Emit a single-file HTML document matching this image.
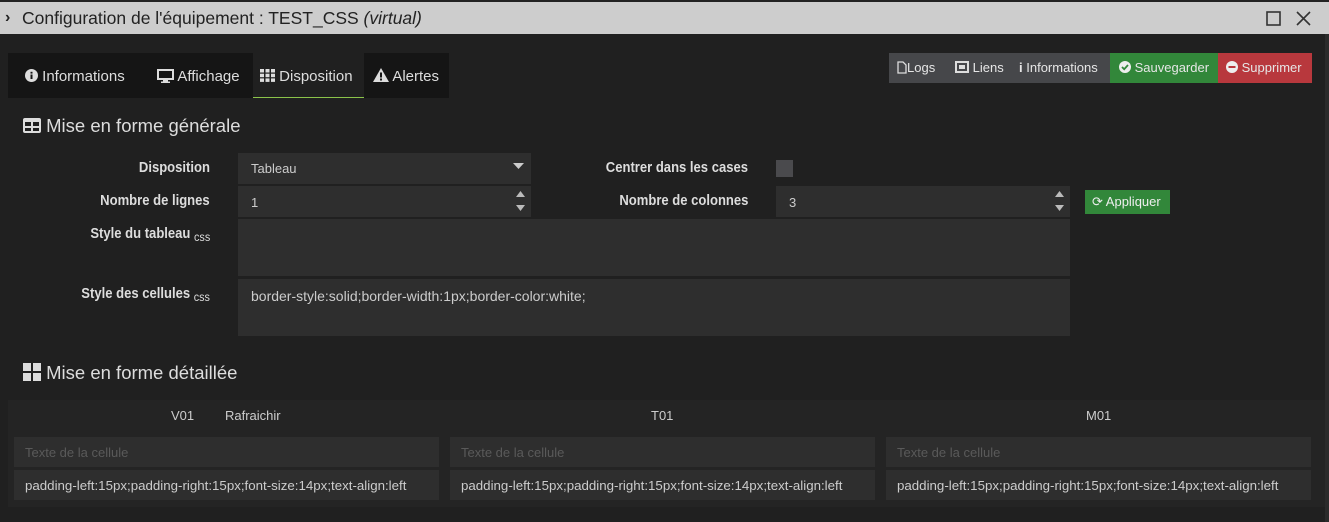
<!DOCTYPE html>
<html><head><meta charset="utf-8"><style>
*{box-sizing:border-box;margin:0;padding:0}
body{width:1329px;height:522px;background:#202020;font-family:"Liberation Sans",sans-serif;color:#ddd;position:relative;overflow:hidden}
.a{position:absolute}
.title{left:0;top:0;width:1329px;height:34px;background:#cdcdcd;border-top:2px solid #222;color:#222;font-size:17.5px;line-height:32px;padding-left:22px}
.tabs{left:8px;top:53px;width:441px;height:45px;background:#151515}
.tab{position:absolute;top:0;height:45px;line-height:47px;font-size:15px;color:#ddd}
.btn{position:absolute;top:53px;height:30px;line-height:30px;font-size:13px;color:#e6e6e6}
.lbl{position:absolute;font-size:14.5px;color:#ddd;text-align:right;font-weight:bold;transform:scaleX(.9);transform-origin:right}
.inp{position:absolute;background:#2e2e2e;font-size:13px;color:#ccc;padding-left:13px}
.h{font-size:18.5px;color:#ddd}
.sp{position:absolute;right:6px;width:9px;height:6px}
</style></head><body>
<div class="a title"><span style="position:absolute;left:5px;top:0;font-weight:bold;font-size:16px">›</span>Configuration de l'équipement : TEST_CSS <i>(virtual)</i>
<svg class="a" style="left:1266px;top:9px" width="15" height="15"><rect x="1" y="1" width="13" height="13" fill="none" stroke="#333" stroke-width="1.6"/></svg>
<svg class="a" style="left:1296px;top:9px" width="15" height="15"><path d="M1 1L14 14M14 1L1 14" stroke="#333" stroke-width="1.6"/></svg>
</div>
<div class="a" style="left:1325px;top:34px;width:4px;height:488px;background:#2b2b2b"></div>

<div class="a tabs">
<div class="tab" style="left:17px"><svg width="13" height="13" style="vertical-align:-1px"><circle cx="6.5" cy="6.5" r="6.5" fill="#ddd"/><rect x="5.5" y="5.5" width="2" height="4.5" fill="#151515"/><rect x="5.5" y="2.8" width="2" height="1.8" fill="#151515"/></svg> Informations</div>
<div class="tab" style="left:149px"><svg width="17" height="14" style="vertical-align:-2px"><rect x="1" y="1" width="15" height="9" fill="none" stroke="#ddd" stroke-width="2"/><rect x="6" y="11" width="5" height="1.5" fill="#ddd"/><rect x="4" y="12.5" width="9" height="1.5" fill="#ddd"/></svg> Affichage</div>
<div class="tab" style="left:245px;width:111px;background:#202020;border-bottom:1px solid #8bc34a;padding-left:7px"><svg width="15" height="13" style="vertical-align:-1px" fill="#ddd"><rect x="0" y="0" width="4" height="3.5"/><rect x="5.5" y="0" width="4" height="3.5"/><rect x="11" y="0" width="4" height="3.5"/><rect x="0" y="4.7" width="4" height="3.5"/><rect x="5.5" y="4.7" width="4" height="3.5"/><rect x="11" y="4.7" width="4" height="3.5"/><rect x="0" y="9.4" width="4" height="3.5"/><rect x="5.5" y="9.4" width="4" height="3.5"/><rect x="11" y="9.4" width="4" height="3.5"/></svg> Disposition</div>
<div class="tab" style="left:365px"><svg width="16" height="14" style="vertical-align:-1px"><path d="M8 0L16 14H0Z" fill="#ddd"/><rect x="7" y="4.5" width="2" height="5" fill="#151515"/><rect x="7" y="10.5" width="2" height="2" fill="#151515"/></svg> Alertes</div>
</div>

<div class="btn" style="left:889px;width:221px;background:#46474a"></div>
<div class="btn" style="left:897px"><svg width="10" height="13" style="vertical-align:-2px"><path d="M1 1H6L9 4V12H1Z" fill="none" stroke="#ddd" stroke-width="1.3"/></svg>Logs</div>
<div class="btn" style="left:955px"><svg width="14" height="12" style="vertical-align:-1px"><rect x="1" y="1" width="12" height="10" fill="none" stroke="#ddd" stroke-width="2"/><rect x="4" y="4" width="6" height="4" fill="#ddd"/></svg> Liens</div>
<div class="btn" style="left:1019px"><b>i</b> Informations</div>
<div class="btn" style="left:1110px;width:108px;background:#32873a;padding-left:9px"><svg width="12" height="12" style="vertical-align:-1px"><circle cx="6" cy="6" r="6" fill="#eee"/><path d="M3 6L5.2 8.2L9 4" stroke="#32873a" stroke-width="1.8" fill="none"/></svg> Sauvegarder</div>
<div class="btn" style="left:1218px;width:94px;background:#b8383d;padding-left:8px"><svg width="12" height="12" style="vertical-align:-1px"><circle cx="6" cy="6" r="6" fill="#eee"/><rect x="2.5" y="5" width="7" height="2" fill="#b8383d"/></svg> Supprimer</div>

<div class="a h" style="left:23px;top:115px"><svg width="18" height="15" style="vertical-align:-1px"><rect x="0" y="0" width="18" height="15" rx="2" fill="#ddd"/><rect x="2" y="4" width="6" height="4" fill="#202020"/><rect x="10" y="4" width="6" height="4" fill="#202020"/><rect x="2" y="10" width="6" height="3" fill="#202020"/><rect x="10" y="10" width="6" height="3" fill="#202020"/></svg>&nbsp;Mise en forme générale</div>

<div class="lbl" style="right:1119px;top:160px">Disposition</div>
<div class="inp" style="left:238px;top:153px;width:293px;height:31px;line-height:31px">Tableau<svg class="a" style="right:7px;top:10px" width="11" height="6"><path d="M0 0H11L5.5 6Z" fill="#ccc"/></svg></div>
<div class="lbl" style="right:581px;top:160px">Centrer dans les cases</div>
<div class="a" style="left:776px;top:160px;width:17px;height:17px;background:#4a4a4d"></div>

<div class="lbl" style="right:1119px;top:193px">Nombre de lignes</div>
<div class="inp" style="left:238px;top:186px;width:293px;height:31px;line-height:33px">1<svg class="sp" style="top:5px" viewBox="0 0 9 6"><path d="M0 6H9L4.5 0Z" fill="#bbb"/></svg><svg class="sp" style="top:19px" viewBox="0 0 9 6"><path d="M0 0H9L4.5 6Z" fill="#bbb"/></svg></div>
<div class="lbl" style="right:581px;top:193px">Nombre de colonnes</div>
<div class="inp" style="left:776px;top:186px;width:294px;height:31px;line-height:33px">3<svg class="sp" style="top:5px" viewBox="0 0 9 6"><path d="M0 6H9L4.5 0Z" fill="#bbb"/></svg><svg class="sp" style="top:19px" viewBox="0 0 9 6"><path d="M0 0H9L4.5 6Z" fill="#bbb"/></svg></div>
<div class="a" style="left:1085px;top:190px;width:85px;height:24px;background:#32873a;font-size:13px;line-height:24px;padding-left:7px;color:#eee">⟳ Appliquer</div>

<div class="lbl" style="right:1119px;top:226px">Style du tableau <span style="font-weight:normal;font-size:12px;position:relative;top:3px">css</span></div>
<div class="inp" style="left:238px;top:219px;width:832px;height:57px"></div>
<div class="lbl" style="right:1119px;top:286px">Style des cellules <span style="font-weight:normal;font-size:12px;position:relative;top:3px">css</span></div>
<div class="inp" style="left:238px;top:279px;width:832px;height:57px;font-size:14px;padding-top:9px">border-style:solid;border-width:1px;border-color:white;</div>

<div class="a h" style="left:23px;top:362px"><svg width="18" height="18" style="vertical-align:-2px" fill="#ddd"><rect x="0" y="0" width="8" height="8"/><rect x="10" y="0" width="8" height="8"/><rect x="0" y="10" width="8" height="8"/><rect x="10" y="10" width="8" height="8"/></svg>&nbsp;Mise en forme détaillée</div>

<div class="a" style="left:8px;top:400px;width:1317px;height:107px;background:#242424"></div>
<div class="a" style="left:171px;top:408px;font-size:13px;color:#ccc">V01</div>
<div class="a" style="left:225px;top:408px;font-size:13px;color:#ccc">Rafraichir</div>
<div class="a" style="left:651px;top:408px;font-size:13px;color:#ccc">T01</div>
<div class="a" style="left:1086px;top:408px;font-size:13px;color:#ccc">M01</div>

<div class="inp" style="left:14px;top:437px;width:425px;height:30px;line-height:32px;color:#5a5a5a;padding-left:11px">Texte de la cellule</div>
<div class="inp" style="left:450px;top:437px;width:425px;height:30px;line-height:32px;color:#5a5a5a;padding-left:11px">Texte de la cellule</div>
<div class="inp" style="left:886px;top:437px;width:425px;height:30px;line-height:32px;color:#5a5a5a;padding-left:11px">Texte de la cellule</div>
<div class="inp" style="left:14px;top:470px;width:425px;height:30px;line-height:32px;padding-left:11px;font-size:13.3px">padding-left:15px;padding-right:15px;font-size:14px;text-align:left</div>
<div class="inp" style="left:450px;top:470px;width:425px;height:30px;line-height:32px;padding-left:11px;font-size:13.3px">padding-left:15px;padding-right:15px;font-size:14px;text-align:left</div>
<div class="inp" style="left:886px;top:470px;width:425px;height:30px;line-height:32px;padding-left:11px;font-size:13.3px">padding-left:15px;padding-right:15px;font-size:14px;text-align:left</div>
</body></html>
